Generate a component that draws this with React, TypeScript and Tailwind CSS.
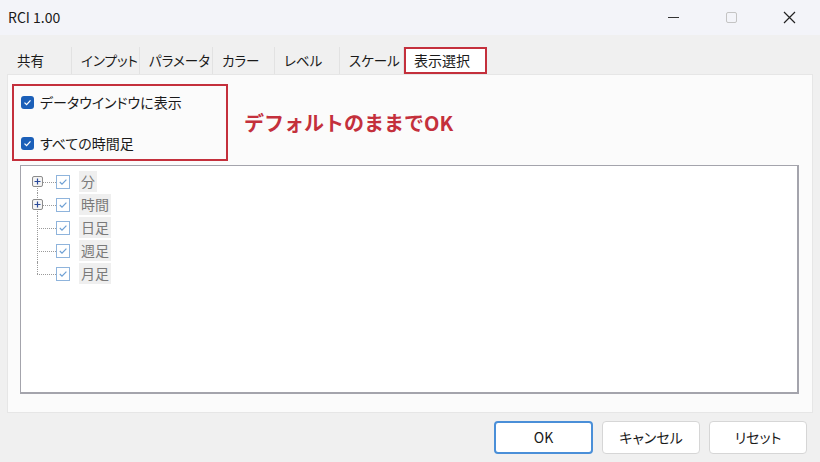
import React from 'react'

const TABS = [
  { label: '共有', w: 'w-[64px]' },
  { label: 'インプット', w: 'w-[68px]' },
  { label: 'パラメータ', w: 'w-[73px]' },
  { label: 'カラー', w: 'w-[62px]' },
  { label: 'レベル', w: 'w-[65px]' },
  { label: 'スケール', w: 'w-[64px]' },
]

const TREE = [
  { label: '分', plus: true },
  { label: '時間', plus: true },
  { label: '日足', plus: false },
  { label: '週足', plus: false },
  { label: '月足', plus: false },
]

function BlueCheck() {
  return (
    <span className="w-[13px] h-[13px] rounded-[3px] bg-[#1b5fb8] flex items-center justify-center shrink-0">
      <svg width="9" height="9" viewBox="0 0 9 9">
        <path d="M1.5 4.6 L3.6 6.6 L7.5 2.4" fill="none" stroke="#fff" strokeWidth="1.3" />
      </svg>
    </span>
  )
}

function TreeCheck() {
  return (
    <span className="w-[14px] h-[14px] border border-[#8fb4dc] bg-white flex items-center justify-center shrink-0">
      <svg width="10" height="10" viewBox="0 0 10 10">
        <path d="M1.8 5 L4 7.2 L8.4 2.6" fill="none" stroke="#6d9fd4" strokeWidth="1.2" />
      </svg>
    </span>
  )
}

function TreeRow({ label, plus, first, last }: { label: string; plus: boolean; first: boolean; last: boolean }) {
  return (
    <div className="flex items-center h-[23px]">
      <div className="relative w-[29px] h-full shrink-0">
        <div
          className={`absolute left-[10px] border-l border-dotted border-[#9a9a9a] ${first ? 'top-1/2 bottom-0' : last ? 'top-0 h-1/2' : 'top-0 bottom-0'}`}
        />
        <div className="absolute left-[10px] right-0 top-1/2 border-t border-dotted border-[#9a9a9a]" />
        {plus && (
          <div className="absolute left-[5px] top-[6px] w-[11px] h-[11px] rounded-[2px] border border-[#8c8c8c] bg-[#f4f4f4] flex items-center justify-center">
            <svg width="7" height="7" viewBox="0 0 7 7">
              <path d="M0.5 3.5 H6.5 M3.5 0.5 V6.5" stroke="#2a4a9a" strokeWidth="1.2" />
            </svg>
          </div>
        )}
      </div>
      <TreeCheck />
      <span className="ml-[9px] px-[2px] bg-[#efefef] text-[14px] leading-[21px] text-[#7a7a7a]">{label}</span>
    </div>
  )
}

export default function App() {
  return (
    <div className="w-[820px] h-[462px] bg-[#f0f0f0] flex flex-col overflow-hidden select-none font-['Noto_Sans_CJK_JP','Noto_Sans',sans-serif] [font-feature-settings:'palt']">
      {/* title bar */}
      <div className="h-[35px] bg-[#f3f4f9] flex items-center shrink-0">
        <span className="ml-[8px] text-[14px] text-[#1a1a1a]">RCI 1.00</span>
        <div className="ml-auto flex items-center h-full">
          <div className="w-[58px] h-full flex items-center justify-center">
            <span className="w-[11px] border-t border-[#333]" />
          </div>
          <div className="w-[58px] h-full flex items-center justify-center">
            <span className="w-[11px] h-[11px] border border-[#c4c4c4] rounded-[2px]" />
          </div>
          <div className="w-[58px] h-full flex items-center justify-center mr-[2px]">
            <svg width="13" height="13" viewBox="0 0 13 13">
              <path d="M1 1 L12 12 M12 1 L1 12" stroke="#222" strokeWidth="1.2" />
            </svg>
          </div>
        </div>
      </div>

      {/* tabs */}
      <div className="flex items-end h-[39px] pl-[8px] shrink-0">
        {TABS.map(t => (
          <div
            key={t.label}
            className={`${t.w} h-[27px] flex items-center pl-[9px] whitespace-nowrap border-r border-[#e2e2e2] text-[13.5px] text-[#1a1a1a] bg-[#f0f0f0]`}
          >
            {t.label}
          </div>
        ))}
        <div className="w-[83px] h-[27px] flex items-center pl-[8px] whitespace-nowrap border-2 border-[#c4303c] bg-white text-[14px] text-[#1a1a1a]">
          表示選択
        </div>
      </div>

      {/* tab panel */}
      <div className="mx-[7px] h-[339px] bg-[#fbfbfb] border border-[#e6e6e6] flex flex-col shrink-0">
        <div className="flex items-center">
          <div className="ml-[4px] mt-[9px] w-[216px] h-[77px] border-2 border-[#c4303c] flex flex-col pl-[7px] justify-center gap-[20px]">
            <div className="flex items-center gap-[6px] text-[14px] text-[#1a1a1a]">
              <BlueCheck />
              データウインドウに表示
            </div>
            <div className="flex items-center gap-[6px] text-[14px] text-[#1a1a1a]">
              <BlueCheck />
              すべての時間足
            </div>
          </div>
          <span className="ml-[16px] mt-[9px] text-[20px] font-bold text-[#c4303c] [font-feature-settings:normal]">
            デフォルトのままでOK
          </span>
        </div>

        <div className="ml-[12px] mt-[4px] w-[779px] h-[229px] bg-white border border-[#a4a4ac] border-r-2 border-b-2 pt-[4px] pl-[6px]">
          {TREE.map((r, i) => (
            <TreeRow key={r.label} label={r.label} plus={r.plus} first={i === 0} last={i === TREE.length - 1} />
          ))}
        </div>
      </div>

      {/* buttons */}
      <div className="flex justify-end gap-[9px] pr-[13px] mt-[8px]">
        <button className="w-[99px] h-[33px] rounded-[4px] border-2 border-[#4a8fd8] bg-white text-[14px] text-[#1a1a1a]">
          OK
        </button>
        <button className="w-[98px] h-[33px] rounded-[4px] border border-[#d6d6d6] bg-white text-[14px] text-[#1a1a1a]">
          キャンセル
        </button>
        <button className="w-[98px] h-[33px] rounded-[4px] border border-[#d6d6d6] bg-white text-[14px] text-[#1a1a1a]">
          リセット
        </button>
      </div>
    </div>
  )
}
